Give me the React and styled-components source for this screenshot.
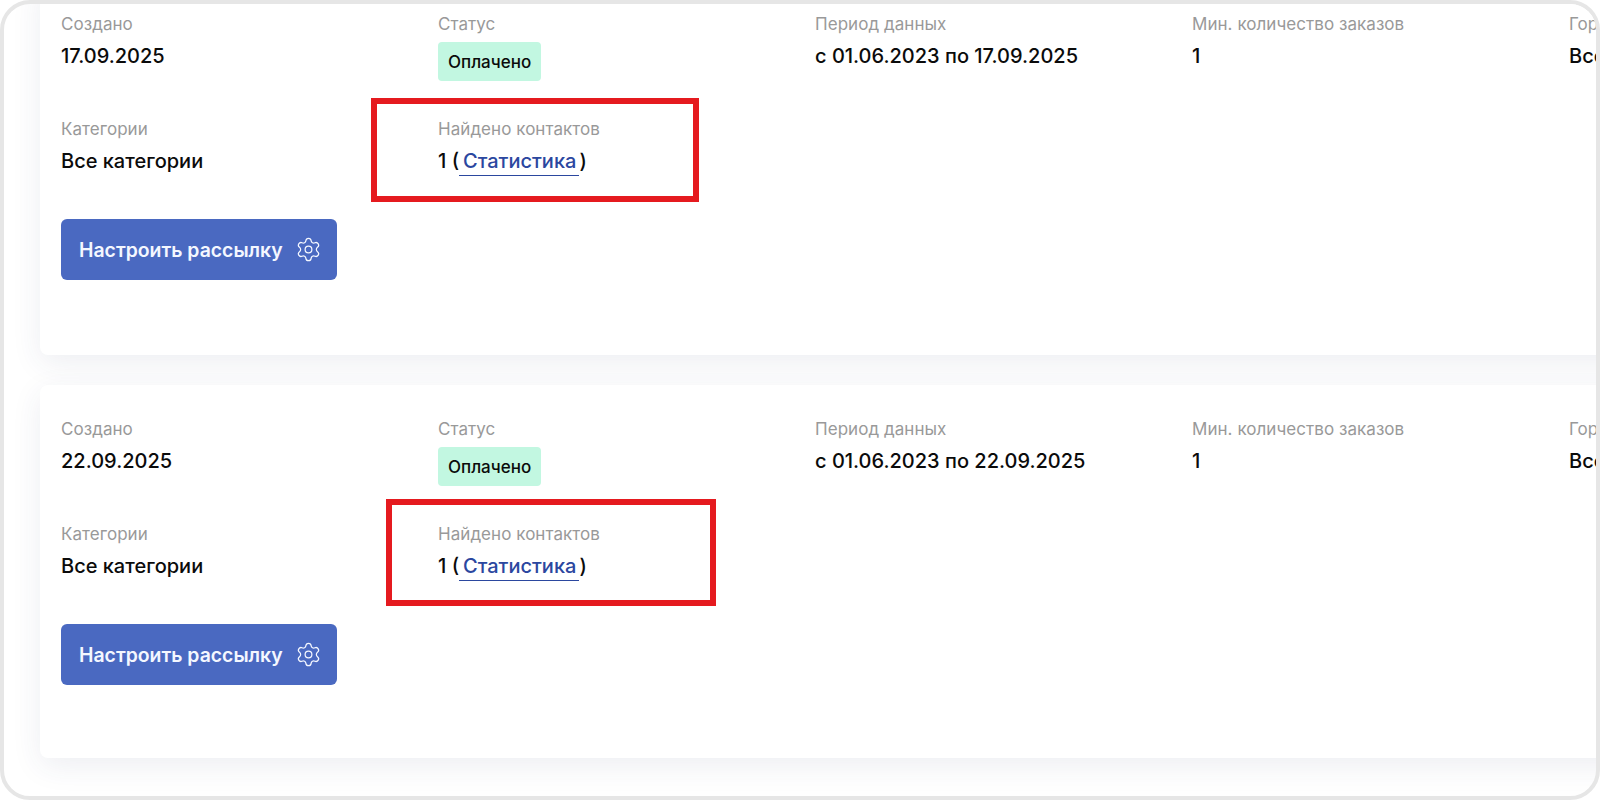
import React from "react";
import styled, { createGlobalStyle } from "styled-components";
import { Settings } from "lucide-react";

const Global = createGlobalStyle`
  html, body { margin: 0; padding: 0; background: #fff; }
  body { font-family: Inter, "Noto Sans", sans-serif; }
`;

const Frame = styled.div`
  position: relative;
  width: 1600px;
  height: 800px;
  box-sizing: border-box;
  border: 4px solid #e6e6e6;
  border-radius: 30px;
  background: #fff;
  overflow: hidden;
`;

const List = styled.div`
  display: flex;
  flex-direction: column;
  gap: 30px;
  margin-top: -24px;
  padding-left: 36px;
`;

const Card = styled.section`
  width: 1600px;
  height: ${(p) => p.$height}px;
  box-sizing: border-box;
  padding: 32px 21px;
  background: #fff;
  border-radius: 8px;
  box-shadow: 0 8px 30px rgba(45, 55, 100, 0.085);
`;

const Grid = styled.div`
  display: grid;
  grid-template-columns: repeat(5, 377px);
  row-gap: 24px;
`;

const Field = styled.div`
  display: flex;
  flex-direction: column;
  align-items: flex-start;
  gap: 6px;
  min-height: 81px;
`;

const Label = styled.div`
  font-size: 17px;
  line-height: 24px;
  letter-spacing: 0.05px;
  color: #999;
  white-space: nowrap;
`;

const Value = styled.div`
  font-size: 20px;
  line-height: 28px;
  font-weight: 500;
  color: #0b0b0b;
  white-space: nowrap;
`;

const Badge = styled.div`
  display: flex;
  align-items: center;
  height: 39px;
  padding: 0 10px;
  border-radius: 4px;
  background: #c2f7e1;
  color: #0b0b0b;
  font-size: 17px;
  font-weight: 500;
`;

const StatLink = styled.a`
  display: inline-block;
  color: #2b479f;
  padding: 0 3px 0 4px;
  line-height: 27px;
  border-bottom: 1px solid #2b479f;
`;

const Button = styled.button`
  display: flex;
  align-items: center;
  gap: 12px;
  height: 61px;
  margin-top: 21px;
  padding: 0 15px 0 18px;
  border: 0;
  border-radius: 6px;
  background: #4a69c1;
  color: #f4f7ff;
  font-family: inherit;
  font-size: 19.4px;
  font-weight: 600;
  white-space: nowrap;
`;

const Marker = styled.div`
  position: absolute;
  box-sizing: border-box;
  border: 6px solid #e51a1f;
  left: ${(p) => p.$x}px;
  top: ${(p) => p.$y}px;
  width: ${(p) => p.$w}px;
  height: ${(p) => p.$h}px;
`;

const cards = [
  { created: "17.09.2025", period: "с 01.06.2023 по 17.09.2025", height: 375 },
  { created: "22.09.2025", period: "с 01.06.2023 по 22.09.2025", height: 373 },
];

const Item = ({ label, children }) => (
  <Field>
    <Label>{label}</Label>
    {children}
  </Field>
);

export default function App() {
  return (
    <>
      <Global />
      <Frame>
        <List>
          {cards.map((c) => (
            <Card key={c.created} $height={c.height}>
              <Grid>
                <Item label="Создано"><Value>{c.created}</Value></Item>
                <Item label="Статус"><Badge>Оплачено</Badge></Item>
                <Item label="Период данных"><Value>{c.period}</Value></Item>
                <Item label="Мин. количество заказов"><Value>1</Value></Item>
                <Item label="Города"><Value>Все города</Value></Item>
                <Item label="Категории"><Value>Все категории</Value></Item>
                <Item label="Найдено контактов">
                  <Value>1 (<StatLink>Статистика</StatLink>)</Value>
                </Item>
              </Grid>
              <Button>
                Настроить рассылку
                <Settings size={27} strokeWidth={1.1} />
              </Button>
            </Card>
          ))}
        </List>
        <Marker $x={367} $y={94} $w={328} $h={104} />
        <Marker $x={382} $y={495} $w={330} $h={107} />
      </Frame>
    </>
  );
}
